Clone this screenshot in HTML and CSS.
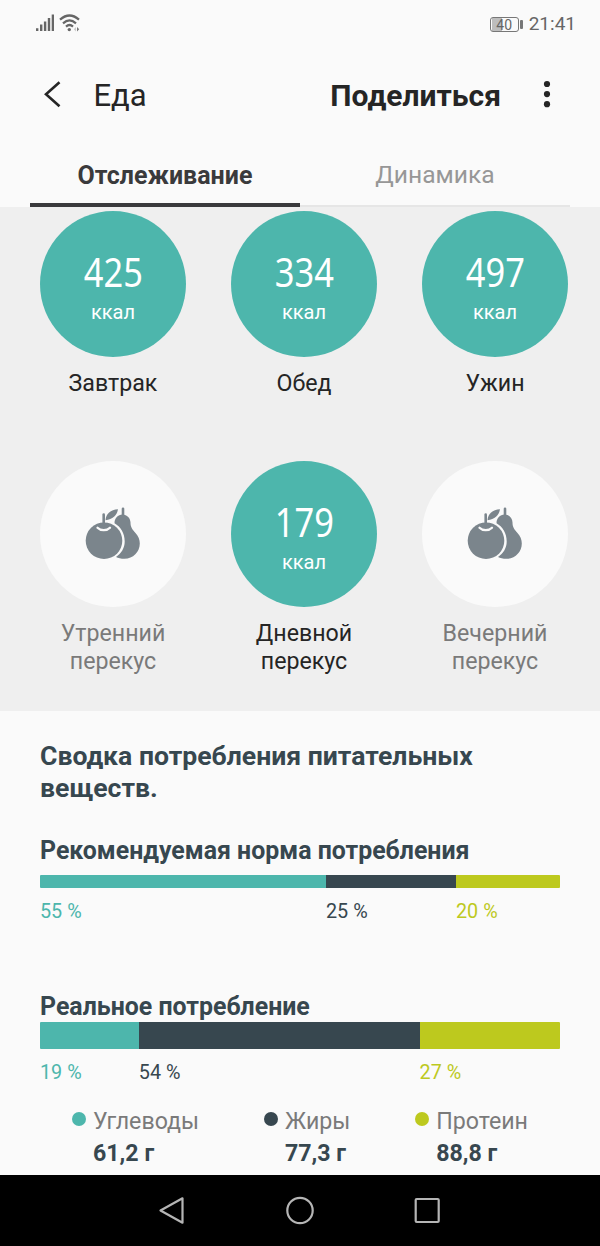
FILE: index.html
```html
<!DOCTYPE html>
<html lang="ru">
<head>
  <meta charset="UTF-8">
  <meta name="viewport" content="width=device-width, initial-scale=1.0">
  <title>Еда</title>
  <link rel="stylesheet" href="styles.css">
</head>
<body>
  <div class="status-bar">
    <div class="status-icons">
      <svg class="signal" width="18" height="18" viewBox="0 0 18 18">
        <path d="M1.200 14.200V17M5.200 10.500V17M9.100 7.500V17M13 4V17M16.900 0.500V17" />
      </svg>
      <svg class="wifi" width="22" height="18" viewBox="0 0 22 18">
        <path d="M1 5.600Q10.500 -2.600 20 5.600M4 9.300Q10.500 3.600 17 9.300M7 12.600Q10.500 9.400 14 12.600" />
        <circle cx="10.300" cy="15.600" r="1.700" />
        <path class="arrows" d="M17 13L14.800 15.300L17 17.600Z" />
        <path class="arrow-on" d="M18 13L20.200 15.300L18 17.600Z" />
      </svg>
    </div>
    <div class="status-right">
      <div class="battery"><span class="battery-level">40</span></div>
      <span class="clock">21:41</span>
    </div>
  </div>

  <div class="header">
    <svg class="back" width="20" height="30" viewBox="0 0 20 30">
      <path d="M17.500 2.300L4 14.300L17.500 26.300" />
    </svg>
    <h1>Еда</h1>
    <span class="share">Поделиться</span>
    <svg class="more" width="10" height="30" viewBox="0 0 10 30">
      <circle cx="5" cy="4" r="3.100" />
      <circle cx="5" cy="14.100" r="3.100" />
      <circle cx="5" cy="24.200" r="3.100" />
    </svg>
  </div>

  <div class="tabs">
    <div class="tab active"><span>Отслеживание</span></div>
    <div class="tab"><span>Динамика</span></div>
  </div>

  <!-- shared snack icon -->
  <svg class="sprite" width="0" height="0">
    <symbol id="fruit" viewBox="0 0 56 54">
      <path d="M38 1.800V9" fill="none" stroke="#7b858c" stroke-width="2.600" stroke-linecap="round" />
      <path d="M37.500 7.500C42 7.500 45.500 11.200 45.500 15.500C45.500 20.500 47.500 22.500 50.500 26C53.500 29.500 54.800 32.500 54.800 36.500C54.800 45 48 51.800 39.500 51.800C36 51.800 33 51 31 50C36.300 46.500 39.700 41 39.700 34.500C39.700 26 35.500 19.500 29.500 16.200C29.500 11 33 7.500 37.500 7.500Z" fill="#7b858c" />
      <circle cx="19" cy="33.700" r="18.300" fill="#7b858c" />
      <path d="M18.700 7.500V18" fill="none" stroke="#7b858c" stroke-width="2.600" stroke-linecap="round" />
      <path d="M20.500 13.200C21 6.800 25.500 2.600 33 2.300C32 8.500 27.500 12.500 20.500 13.200Z" fill="#7b858c" />
      <path d="M12.500 20.800C15.500 24 22 24 25 20.800" fill="none" stroke="#fafafa" stroke-width="2.300" stroke-linecap="round" />
    </symbol>
  </svg>

  <div class="meals">
    <div class="meal">
      <div class="circle"><span class="value">425</span><span class="unit">ккал</span></div>
      <p>Завтрак</p>
    </div>
    <div class="meal">
      <div class="circle"><span class="value">334</span><span class="unit">ккал</span></div>
      <p>Обед</p>
    </div>
    <div class="meal">
      <div class="circle"><span class="value">497</span><span class="unit">ккал</span></div>
      <p>Ужин</p>
    </div>
    <div class="meal empty">
      <div class="circle"><svg width="56" height="54"><use href="#fruit" /></svg></div>
      <p>Утренний<br>перекус</p>
    </div>
    <div class="meal">
      <div class="circle"><span class="value">179</span><span class="unit">ккал</span></div>
      <p>Дневной<br>перекус</p>
    </div>
    <div class="meal empty">
      <div class="circle"><svg width="56" height="54"><use href="#fruit" /></svg></div>
      <p>Вечерний<br>перекус</p>
    </div>
  </div>

  <div class="summary">
    <h2>Сводка потребления питательных веществ.</h2>

    <h3>Рекомендуемая норма потребления</h3>
    <div class="bar">
      <div class="carbs" style="width: 55%"></div>
      <div class="fat" style="width: 25%"></div>
      <div class="protein" style="width: 20%"></div>
    </div>
    <div class="percents">
      <span class="carbs-text" style="width: 55%">55 %</span>
      <span class="fat-text" style="width: 25%">25 %</span>
      <span class="protein-text" style="width: 20%">20 %</span>
    </div>

    <h3 class="actual-title">Реальное потребление</h3>
    <div class="bar actual">
      <div class="carbs" style="width: 19%"></div>
      <div class="fat" style="width: 54%"></div>
      <div class="protein" style="width: 27%"></div>
    </div>
    <div class="percents">
      <span class="carbs-text" style="width: 19%">19 %</span>
      <span class="fat-text" style="width: 54%">54 %</span>
      <span class="protein-text" style="width: 27%">27 %</span>
    </div>

    <div class="legend">
      <div class="legend-item">
        <i class="dot carbs"></i>
        <div><span class="name">Углеводы</span><b>61,2 г</b></div>
      </div>
      <div class="legend-item">
        <i class="dot fat"></i>
        <div><span class="name">Жиры</span><b>77,3 г</b></div>
      </div>
      <div class="legend-item">
        <i class="dot protein"></i>
        <div><span class="name">Протеин</span><b>88,8 г</b></div>
      </div>
    </div>
  </div>

  <div class="nav-bar">
    <svg width="28" height="30" viewBox="0 0 28 30">
      <path d="M2.500 14.500L24.500 2.300V26.700Z" />
    </svg>
    <svg width="30" height="30" viewBox="0 0 30 30">
      <circle cx="15" cy="14.500" r="12.700" />
    </svg>
    <svg width="28" height="30" viewBox="0 0 28 30">
      <rect x="1.700" y="3" width="23" height="23" rx="1" />
    </svg>
  </div>
</body>
</html>
```
FILE: styles.css
```css
* {
  padding: 0;
  margin: 0;
  box-sizing: border-box;
}
body {
  width: 600px;
  height: 1246px;
  background: #fafafa;
  font-family: Roboto, "Liberation Sans", sans-serif;
  color: #252525;
  overflow: hidden;
}
svg {
  display: block;
  flex: none;
}
.sprite {
  position: absolute;
}

/* Status bar */
.status-bar {
  height: 48px;
  padding: 0 24px 0 36px;
  display: flex;
  align-items: center;
  justify-content: space-between;
}
.status-icons {
  display: flex;
  gap: 5px;
  padding-bottom: 2px;
}
.signal path {
  stroke: #666;
  stroke-width: 2.4;
}
.wifi path {
  fill: none;
  stroke: #666;
  stroke-width: 2.2;
}
.wifi circle {
  fill: #666;
}
.wifi .arrows {
  fill: #ccc;
  stroke: none;
}
.wifi .arrow-on {
  fill: #777;
  stroke: none;
}
.status-right {
  display: flex;
  align-items: center;
  gap: 6px;
}
.battery {
  display: flex;
  align-items: center;
  gap: 1px;
}
.battery::after {
  content: "";
  width: 3px;
  height: 9px;
  background: #777;
  border-radius: 1px;
}
.battery-level {
  width: 29px;
  height: 15px;
  border: 1px solid #777;
  border-radius: 3px;
  background: linear-gradient(to right, transparent 1px, #bdbdbd 1px, #bdbdbd 11px, transparent 11px);
  color: #666;
  font-size: 14px;
  line-height: 14px;
  text-align: center;
}
.clock {
  color: #666;
  font-size: 19px;
  line-height: 24px;
}

/* Header */
.header {
  height: 94px;
  padding: 0 48px 0 42px;
  display: flex;
  align-items: center;
}
.back path {
  fill: none;
  stroke: #252525;
  stroke-width: 2.6;
}
.header h1 {
  margin-left: 31.5px;
  font-size: 31px;
  font-weight: 400;
}
.share {
  margin-left: auto;
  font-size: 30px;
  font-weight: 700;
}
.more {
  margin-left: 41px;
}
.more circle {
  fill: #252525;
}

/* Tabs */
.tabs {
  height: 65px;
  padding: 0 30px;
  display: flex;
}
.tab {
  flex: 1;
  padding-top: 18px;
  border-bottom: 2px solid #e6e6e6;
  color: #979797;
  font-size: 24.6px;
  line-height: 30px;
  text-align: center;
}
.tab.active {
  padding-top: 19px;
  border-bottom: 4px solid #3a3a3c;
  color: #3a3a3c;
  font-size: 25px;
  font-weight: 700;
}

/* Meals */
.meals {
  height: 504px;
  padding: 4px 32px 0 40px;
  background: #efefef;
  display: grid;
  grid-template-columns: repeat(3, 146px);
  grid-template-rows: 250px 250px;
  column-gap: 45px;
}
.circle {
  width: 146px;
  height: 146px;
  border-radius: 50%;
  background: #4db6ac;
  color: #fff;
  display: flex;
  flex-direction: column;
  align-items: center;
}
.value {
  padding-top: 34px;
  font-family: "Noto Sans", "Open Sans", sans-serif;
  font-size: 40px;
  font-weight: 400;
  line-height: 53px;
  transform: scaleX(0.86);
}
.unit {
  padding-top: 1px;
  font-size: 20px;
  line-height: 26px;
}
.meal p {
  margin: 12px -20px 0;
  font-size: 23.2px;
  line-height: 28px;
  text-align: center;
}
.meal.empty .circle {
  background: #fafafa;
  justify-content: center;
}
.meal.empty p {
  color: #7a7a7a;
}

/* Summary */
.summary {
  height: 464px;
  padding: 29px 40px 0;
  color: #37474f;
}
.summary h2 {
  font-size: 26.6px;
  line-height: 32px;
}
.summary h3 {
  margin-top: 32px;
  font-size: 24.9px;
  line-height: 30px;
}
.bar {
  height: 13px;
  margin-top: 9px;
  display: flex;
  border-radius: 1px;
  overflow: hidden;
}
.bar.actual {
  height: 27px;
  margin-top: 0;
}
.carbs {
  background: #4db6ac;
}
.fat {
  background: #37474f;
}
.protein {
  background: #bdc91e;
}
.percents {
  margin-top: 12px;
  display: flex;
  font-size: 19.8px;
  line-height: 24px;
}
.carbs-text {
  color: #4db6ac;
}
.protein-text {
  color: #bdc91e;
}
.summary .actual-title {
  margin-top: 68px;
}
.legend {
  margin-top: 20px;
  padding: 0 32px;
  display: flex;
  justify-content: space-between;
}
.legend-item {
  display: flex;
  gap: 7px;
  font-size: 23.2px;
  line-height: 32px;
}
.dot {
  width: 14px;
  height: 14px;
  margin-top: 7px;
  border-radius: 50%;
}
.legend-item span,
.legend-item b {
  display: block;
}
.name {
  color: #7a7a7a;
}

/* Android navigation */
.nav-bar {
  height: 71px;
  padding: 0 158px;
  background: #000;
  display: flex;
  align-items: center;
  justify-content: space-between;
}
.nav-bar svg {
  fill: none;
  stroke: #b5b5b5;
  stroke-width: 2.2;
  stroke-linejoin: round;
}
```
